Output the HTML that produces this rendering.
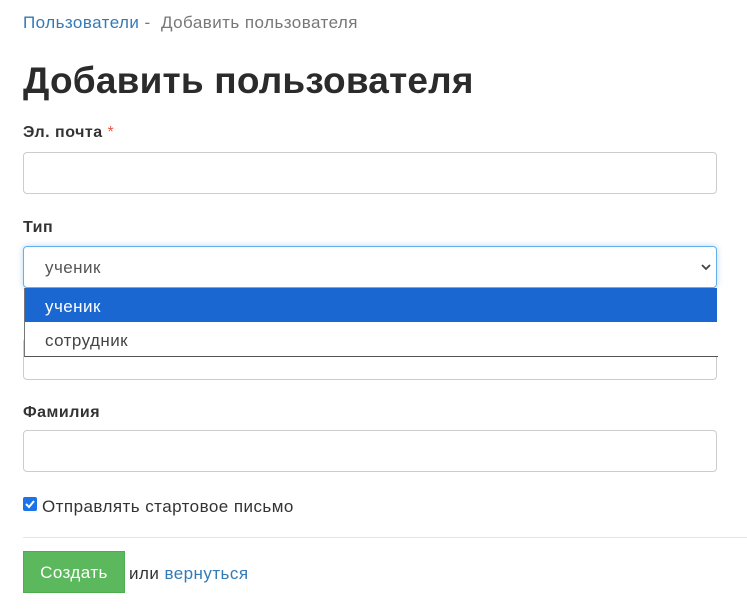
<!DOCTYPE html>
<html><head><meta charset="utf-8"><style>
body{margin:0;background:#fff;font-family:"Liberation Sans","DejaVu Sans",sans-serif;color:#333;width:747px;height:610px;overflow:hidden;position:relative}
.a{position:absolute}
.t{font-size:17px;letter-spacing:0.45px}
.bc{left:23px;top:13px;color:#777}
.bc span{color:#337ab7}
h1{position:absolute;left:23px;top:60px;margin:0;font-size:37px;font-weight:bold;color:#2b2b2b;letter-spacing:0.2px}
.lbl{font-size:16px;font-weight:bold;color:#333;letter-spacing:0.5px}
.inp{left:23px;width:692px;height:40px;border:1px solid #ccc;border-radius:4px;background:#fff}
</style></head><body>
<div class="a bc t"><span>Пользователи</span> -&nbsp; Добавить пользователя</div>
<h1>Добавить пользователя</h1>
<div class="a lbl" style="left:23px;top:124px">Эл. почта <span style="color:#e9573f;font-weight:normal">*</span></div>
<div class="a inp" style="top:152px"></div>
<div class="a lbl" style="left:23px;top:219px">Тип</div>
<div class="a inp" style="top:246px;border-color:#66afe9;box-shadow:0 0 6px rgba(102,175,233,.5)"></div>
<div class="a t" style="left:45px;top:258px;color:#555">ученик</div>
<svg class="a" style="left:700px;top:262px" width="12" height="10"><path d="M2 3 L6 7 L10 3" stroke="#444" stroke-width="1.8" fill="none"/></svg>
<div class="a inp" style="top:338px"></div>
<div class="a" style="left:24px;top:288px;width:693px;height:68px;background:#fff;border-left:1px solid #777;border-bottom:1px solid #555"></div>
<div class="a" style="left:25px;top:288px;width:692px;height:34px;background:#1a67d2"></div>
<div class="a t" style="left:45px;top:297px;color:#fff">ученик</div>
<div class="a t" style="left:45px;top:331px;color:#444">сотрудник</div>
<div class="a lbl" style="left:23px;top:404px">Фамилия</div>
<div class="a inp" style="top:430px"></div>
<div class="a" style="left:23px;top:497px;width:14px;height:14px;background:#1a73e8;border-radius:2px"></div>
<svg class="a" style="left:23px;top:497px" width="14" height="14"><path d="M3 7 L6 10 L11 4" stroke="#fff" stroke-width="2" fill="none"/></svg>
<div class="a t" style="left:42px;top:497px;color:#333">Отправлять стартовое письмо</div>
<div class="a" style="left:23px;top:537px;width:724px;height:1px;background:#e5e5e5"></div>
<div class="a t" style="left:23px;top:551px;width:100px;height:40px;background:#5cb85c;border:1px solid #4cae4c;color:#fff;line-height:42px;text-align:center">Создать</div>
<div class="a t" style="left:129px;top:564px;color:#333">или <span style="color:#337ab7">вернуться</span></div>
</body></html>
